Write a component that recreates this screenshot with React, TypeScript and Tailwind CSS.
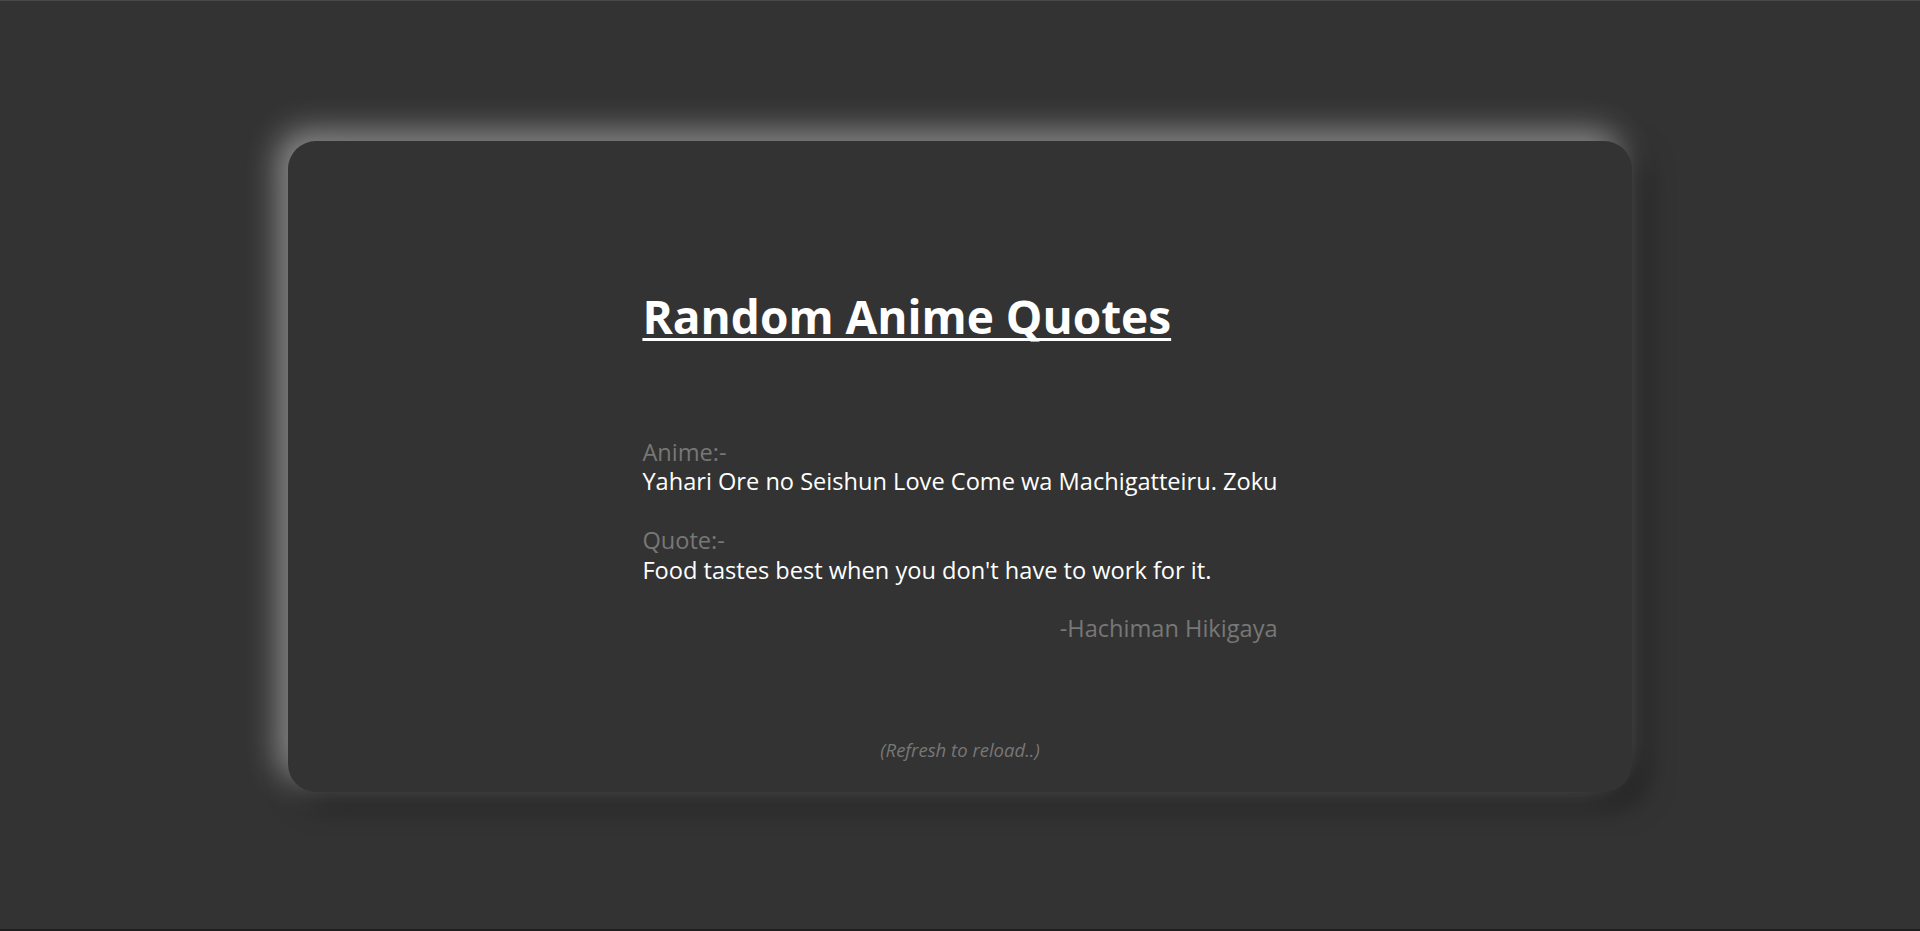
import React from "react";

export default function App() {
  return (
    <div className="flex h-[931px] w-full flex-col items-center border-t border-b-2 border-t-[#4a4a4a] border-b-[#1f1f1f] bg-[#333333] pt-[140px] font-['Open_Sans',sans-serif]">
      <div className="flex h-[651px] w-[1344px] flex-col items-center rounded-[28px] bg-[#333333] shadow-[-10px_-10px_32px_rgba(255,255,255,0.45),10px_10px_30px_rgba(0,0,0,0.5)]">
        <div className="mt-[147px] flex w-fit flex-col">
          <h1 className="text-[46px] font-bold leading-[56px] text-white underline decoration-[3px] underline-offset-[4px] [text-decoration-skip-ink:none]">
            Random Anime Quotes
          </h1>
          <div className="mt-[94px] flex flex-col text-[23.6px] leading-[29.4px]">
            <span className="text-[#777777]">Anime:-</span>
            <span className="text-white">Yahari Ore no Seishun Love Come wa Machigatteiru. Zoku</span>
            <span className="mt-[29.4px] text-[#777777]">Quote:-</span>
            <span className="text-white">Food tastes best when you don't have to work for it.</span>
            <span className="mt-[29.3px] self-end text-[#777777]">-Hachiman Hikigaya</span>
          </div>
        </div>
        <p className="mt-auto pb-[30px] text-[18.5px] italic leading-[24px] text-[#777777]">
          (Refresh to reload..)
        </p>
      </div>
    </div>
  );
}
